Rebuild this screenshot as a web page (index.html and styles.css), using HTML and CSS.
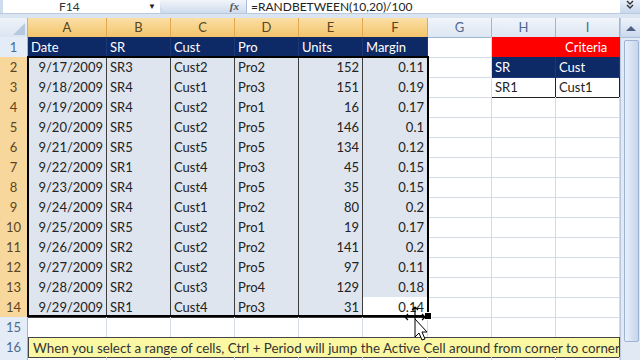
FILE: index.html
```html
<!DOCTYPE html>
<html>
<head>
<meta charset="utf-8">
<link rel="stylesheet" href="styles.css">
</head>
<body>
<div class="fbar">
  <div class="namebox"><span class="nm">F14</span><span class="dd">&#9660;</span></div>
  <div class="fxpill"><span class="fx">fx</span></div>
  <div class="finput">=RANDBETWEEN(10,20)/100</div>
  <div class="expand">
    <svg width="10" height="10" viewBox="0 0 10 10"><path d="M2 1 L5 4 L8 1 M2 5 L5 8 L8 5" fill="none" stroke="#333" stroke-width="1.4"/></svg>
  </div>
</div>
<div class="band"></div>
<div class="main">
  <div class="sheet">
    <div class="row hdr">
      <div class="corner"><svg width="14" height="14" viewBox="0 0 14 14"><path d="M13 1 L13 13 L1 13 Z" fill="#b7c9e1"/></svg></div>
      <div class="ch sel">A</div><div class="ch sel">B</div><div class="ch sel">C</div><div class="ch sel">D</div><div class="ch sel">E</div><div class="ch sel">F</div><div class="ch">G</div><div class="ch">H</div><div class="ch">I</div>
    </div>
    <div class="row">
      <div class="rh">1</div>
      <div class="c nv">Date</div><div class="c nv">SR</div><div class="c nv">Cust</div><div class="c nv">Pro</div><div class="c nv">Units</div><div class="c nv">Margin</div><div class="c"></div><div class="c red span2">Criteria</div>
    </div>
    <div class="row">
      <div class="rh sel">2</div>
      <div class="c t r">9/17/2009</div><div class="c t">SR3</div><div class="c t">Cust2</div><div class="c t">Pro2</div><div class="c t r">152</div><div class="c t r">0.11</div><div class="c"></div><div class="c nv">SR</div><div class="c nv">Cust</div>
    </div>
    <div class="row">
      <div class="rh sel">3</div>
      <div class="c t r">9/18/2009</div><div class="c t">SR4</div><div class="c t">Cust1</div><div class="c t">Pro3</div><div class="c t r">151</div><div class="c t r">0.19</div><div class="c"></div><div class="c bx">SR1</div><div class="c bx">Cust1</div>
    </div>
    <div class="row">
      <div class="rh sel">4</div>
      <div class="c t r">9/19/2009</div><div class="c t">SR4</div><div class="c t">Cust2</div><div class="c t">Pro1</div><div class="c t r">16</div><div class="c t r">0.17</div><div class="c"></div><div class="c"></div><div class="c"></div>
    </div>
    <div class="row">
      <div class="rh sel">5</div>
      <div class="c t r">9/20/2009</div><div class="c t">SR5</div><div class="c t">Cust2</div><div class="c t">Pro5</div><div class="c t r">146</div><div class="c t r">0.1</div><div class="c"></div><div class="c"></div><div class="c"></div>
    </div>
    <div class="row">
      <div class="rh sel">6</div>
      <div class="c t r">9/21/2009</div><div class="c t">SR5</div><div class="c t">Cust5</div><div class="c t">Pro5</div><div class="c t r">134</div><div class="c t r">0.12</div><div class="c"></div><div class="c"></div><div class="c"></div>
    </div>
    <div class="row">
      <div class="rh sel">7</div>
      <div class="c t r">9/22/2009</div><div class="c t">SR1</div><div class="c t">Cust4</div><div class="c t">Pro3</div><div class="c t r">45</div><div class="c t r">0.15</div><div class="c"></div><div class="c"></div><div class="c"></div>
    </div>
    <div class="row">
      <div class="rh sel">8</div>
      <div class="c t r">9/23/2009</div><div class="c t">SR4</div><div class="c t">Cust4</div><div class="c t">Pro5</div><div class="c t r">35</div><div class="c t r">0.15</div><div class="c"></div><div class="c"></div><div class="c"></div>
    </div>
    <div class="row">
      <div class="rh sel">9</div>
      <div class="c t r">9/24/2009</div><div class="c t">SR4</div><div class="c t">Cust1</div><div class="c t">Pro2</div><div class="c t r">80</div><div class="c t r">0.2</div><div class="c"></div><div class="c"></div><div class="c"></div>
    </div>
    <div class="row">
      <div class="rh sel">10</div>
      <div class="c t r">9/25/2009</div><div class="c t">SR5</div><div class="c t">Cust2</div><div class="c t">Pro1</div><div class="c t r">19</div><div class="c t r">0.17</div><div class="c"></div><div class="c"></div><div class="c"></div>
    </div>
    <div class="row">
      <div class="rh sel">11</div>
      <div class="c t r">9/26/2009</div><div class="c t">SR2</div><div class="c t">Cust2</div><div class="c t">Pro2</div><div class="c t r">141</div><div class="c t r">0.2</div><div class="c"></div><div class="c"></div><div class="c"></div>
    </div>
    <div class="row">
      <div class="rh sel">12</div>
      <div class="c t r">9/27/2009</div><div class="c t">SR2</div><div class="c t">Cust2</div><div class="c t">Pro5</div><div class="c t r">97</div><div class="c t r">0.11</div><div class="c"></div><div class="c"></div><div class="c"></div>
    </div>
    <div class="row">
      <div class="rh sel">13</div>
      <div class="c t r">9/28/2009</div><div class="c t">SR2</div><div class="c t">Cust3</div><div class="c t">Pro4</div><div class="c t r">129</div><div class="c t r">0.18</div><div class="c"></div><div class="c"></div><div class="c"></div>
    </div>
    <div class="row">
      <div class="rh sel">14</div>
      <div class="c t r">9/29/2009</div><div class="c t">SR1</div><div class="c t">Cust4</div><div class="c t">Pro3</div><div class="c t r">31</div><div class="c t r act">0.14</div><div class="c"></div><div class="c"></div><div class="c"></div>
    </div>
    <div class="row">
      <div class="rh">15</div>
      <div class="c"></div><div class="c"></div><div class="c"></div><div class="c"></div><div class="c"></div><div class="c"></div><div class="c"></div><div class="c"></div><div class="c"></div>
    </div>
    <div class="row">
      <div class="rh">16</div>
      <div class="c note">When you select a range of cells, Ctrl + Period will jump the Active Cell around from corner to corner of the selected range.</div>
    </div>
    <div class="row">
      <div class="rh"></div>
      <div class="c"></div><div class="c"></div><div class="c"></div><div class="c"></div><div class="c"></div><div class="c"></div><div class="c"></div><div class="c"></div><div class="c"></div>
    </div>

    <div class="selbox"><div class="handle"></div></div>
    <svg class="cursor" width="30" height="40" viewBox="0 0 30 40">
      <path d="M11 1 L8 4 M11 1 L14 4 M11 1 L11 13 M1 11 L4 8 M1 11 L4 14 M1 11 L21 11 M21 11 L18 8 M21 11 L18 14" fill="none" stroke="#000" stroke-width="1.2"/>
      <path d="M11 13 L11 31 L15 27 L18 34 L21 33 L18 26 L23 26 Z" fill="#fff" stroke="#000" stroke-width="1" stroke-linejoin="round"/>
    </svg>
  </div>
  <div class="vscroll">
    <div class="sbtn"><svg width="10" height="6" viewBox="0 0 10 6"><path d="M0 6 L5 1 L10 6 Z" fill="#4d6185"/></svg></div>
    <div class="thumb"></div>
  </div>
</div>
</body>
</html>
```

FILE: styles.css
```css
html, body {
  margin: 0;
  padding: 0;
}
body {
  width: 640px;
  height: 360px;
  overflow: hidden;
  background: #fff;
  font-family: Lato, "Liberation Sans", sans-serif;
  font-size: 13px;
  color: #222;
}
.fbar {
  display: flex;
  height: 13px;
  background: #cfdcee;
  padding-left: 3px;
  overflow: hidden;
  font-size: 12px;
  line-height: 13px;
}
.namebox {
  width: 157px;
  background: #fff;
  display: flex;
  justify-content: space-between;
  padding: 0 4px 0 56px;
  box-sizing: border-box;
  color: #333;
}
.dd {
  font-size: 8px;
  color: #222;
}
.fxpill {
  width: 86px;
  background: linear-gradient(#f2f5fa, #cfdbec);
  border-radius: 0 0 0 10px;
  display: flex;
  justify-content: flex-end;
  padding-right: 7px;
  box-sizing: border-box;
}
.fx {
  font-family: "Liberation Serif", serif;
  font-style: italic;
  font-weight: bold;
  color: #555;
  font-size: 11px;
}
.finput {
  flex: 1;
  background: #fff;
  border-left: 1px solid #a7bad6;
  padding-left: 4px;
  color: #222;
}
.expand {
  width: 20px;
  background: linear-gradient(#e8eef8, #c9d7ec);
  display: flex;
  justify-content: center;
  align-items: flex-start;
}
.band {
  height: 5px;
  background: #dbe5f2;
  border-top: 1px solid #b9c9df;
  box-sizing: border-box;
}
.main {
  display: flex;
  height: 342px;
}
.sheet {
  width: 620px;
  position: relative;
  overflow: hidden;
}
.row {
  display: grid;
  grid-template-columns: 28px 79px 64px 64px 64px 64px 65px 64px 64px 64px;
  height: 20px;
}
.row.hdr {
  height: 19px;
}
.corner {
  background: linear-gradient(#eef3fa, #dbe5f1);
  border-right: 1px solid #9eb6ce;
  border-bottom: 1px solid #9eb6ce;
  box-sizing: border-box;
  display: flex;
  justify-content: flex-end;
  align-items: flex-end;
  padding: 0 1px 1px 0;
}
.ch {
  background: linear-gradient(#f1f5fb, #dce6f2);
  color: #4d6a8e;
  text-align: center;
  line-height: 19px;
  border-right: 1px solid #9eb6ce;
  border-bottom: 1px solid #9eb6ce;
  box-sizing: border-box;
}
.ch.sel {
  background: linear-gradient(#fbdfa6, #f3c46b);
  color: #5a4520;
  border-right-color: #e3a752;
  border-bottom-color: #e3a752;
}
.rh {
  background: #e4ecf7;
  color: #4d6a8e;
  text-align: center;
  line-height: 20px;
  border-right: 1px solid #9eb6ce;
  border-bottom: 1px solid #c5d3e4;
  box-sizing: border-box;
}
.rh.sel {
  background: #f8d79c;
  color: #5a4520;
  border-right-color: #e3a752;
  border-bottom-color: #f0c47c;
}
.c {
  border-right: 1px solid #d4dbe6;
  border-bottom: 1px solid #d4dbe6;
  padding: 0 3px;
  line-height: 20px;
  white-space: nowrap;
  overflow: hidden;
  box-sizing: border-box;
}
.r {
  text-align: right;
}
.t {
  background: #dfe5ef;
  border-color: #3c3c3c;
}
.t.act {
  background: #fff;
}
.nv {
  background: #0d2966;
  color: #fff;
  border-color: #1c3875;
}
.red {
  background: #ff0000;
  color: #fff;
  border-color: #ff0000;
  padding-left: 73px;
}
.span2 {
  grid-column: span 2;
}
.bx {
  border-color: #222;
}
.note {
  grid-column: span 9;
  background: #fbf8a3;
  color: #333;
  border: 1px solid #444;
  font-size: 13.35px;
  padding-left: 4px;
  overflow: hidden;
  text-overflow: clip;
}
.selbox {
  position: absolute;
  left: 27px;
  top: 38px;
  width: 402px;
  height: 261px;
  border: 2px solid #000;
  box-sizing: border-box;
}
.handle {
  position: absolute;
  right: -5px;
  bottom: -5px;
  width: 6px;
  height: 6px;
  background: #000;
  border: 1px solid #fff;
}
.cursor {
  position: absolute;
  left: 404px;
  top: 288px;
}
.vscroll {
  width: 20px;
  background: #e1e9f5;
  border-left: 1px solid #b8c9df;
  box-sizing: border-box;
  display: flex;
  flex-direction: column;
}
.sbtn {
  height: 19px;
  background: linear-gradient(#eef3fa, #cbd9ed);
  border-bottom: 1px solid #aabfdb;
  display: flex;
  justify-content: center;
  align-items: center;
}
.thumb {
  margin: 2px 1px 0 3px;
  height: 300px;
  background: linear-gradient(90deg, #e9f0fa, #c5d5ec);
  border: 1px solid #9fb4d2;
  border-radius: 2px;
}
```
